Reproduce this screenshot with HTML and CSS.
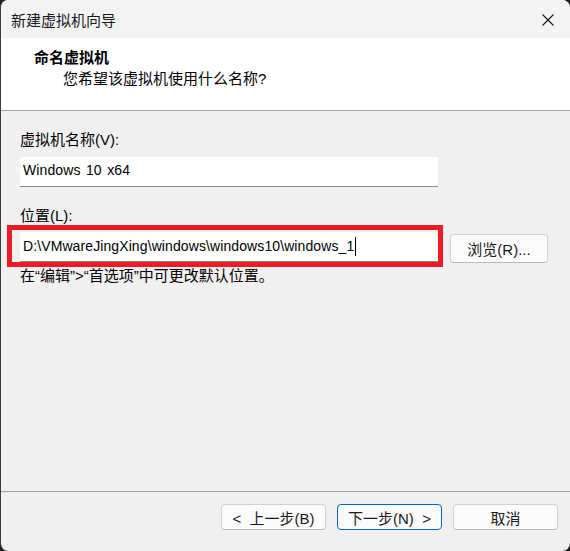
FILE: index.html
```html
<!DOCTYPE html>
<html lang="zh-CN">
<head>
<meta charset="utf-8">
<title>新建虚拟机向导</title>
<link rel="stylesheet" href="styles.css">
</head>
<body>
<div class="window">
  <div class="titlebar">
    <span class="title">新建虚拟机向导</span>
    <svg class="close" width="12" height="12" viewBox="0 0 12 12"><path d="M0.5 0.5 L11.5 11.5 M11.5 0.5 L0.5 11.5" stroke="#1a1a1a" stroke-width="1.1" fill="none"/></svg>
  </div>
  <div class="header">
    <div class="h-title">命名虚拟机</div>
    <div class="h-sub">您希望该虚拟机使用什么名称?</div>
  </div>
  <div class="content">
    <div class="label first">虚拟机名称(V):</div>
    <div class="input name">Windows 10 x64</div>
    <div class="label second">位置(L):</div>
    <div class="row">
      <div class="input">D:\VMwareJingXing\windows\windows10\windows_1<span class="caret"></span></div>
      <div class="btn browse">浏览(R)...</div>
      <div class="highlight"></div>
    </div>
    <div class="note">在“编辑”&gt;“首选项”中可更改默认位置。</div>
  </div>
  <div class="footer">
    <div class="btn">&lt;&nbsp; 上一步(B)</div>
    <div class="btn primary">下一步(N)&nbsp; &gt;</div>
    <div class="btn">取消</div>
  </div>
</div>
</body>
</html>
```
FILE: styles.css
```css
html, body {
  margin: 0;
  padding: 0;
  background: #202020;
}
body {
  width: 570px;
  height: 551px;
  overflow: hidden;
  font-family: "Liberation Sans", "Noto Sans CJK SC", sans-serif;
  font-size: 15px;
  color: #000;
}
.window {
  width: 569px;
  height: 551px;
  background: #f0f0f0;
  border-left: 1px solid #3c3c3c;
  border-radius: 8px;
  overflow: hidden;
  display: flex;
  flex-direction: column;
}
.titlebar {
  height: 38px;
  flex: none;
  background: #f3f3f3;
  display: flex;
  align-items: center;
  justify-content: space-between;
  padding: 0 16px 0 10px;
}
.title {
  line-height: 20px;
  color: #1a1a1a;
  margin-top: 3px;
}
.close {
  margin-top: 2px;
}
.header {
  height: 72px;
  flex: none;
  background: #fff;
  border-bottom: 1px solid #a0a0a0;
  padding: 0 0 0 33px;
  box-sizing: content-box;
}
.h-title {
  font-weight: bold;
  line-height: 20px;
  margin-top: 10px;
}
.h-sub {
  line-height: 20px;
  margin-top: 1px;
  margin-left: 29px;
}
.content {
  flex: 1;
  padding: 0 19px;
}
.label {
  line-height: 20px;
}
.label.first {
  margin-top: 19px;
  margin-bottom: 7px;
}
.label.second {
  margin-top: 19px;
  margin-bottom: 6px;
}
.input {
  width: 418px;
  height: 30px;
  box-sizing: border-box;
  background: #fff;
  border-bottom: 1px solid #8a8a8a;
  padding: 0 2px 3px 3px;
  font-size: 14px;
  letter-spacing: 0.1px;
  display: flex;
  align-items: center;
}
.input.name {
  word-spacing: 1.5px;
}
.row .input {
  padding-bottom: 1px;
}
.caret {
  display: inline-block;
  width: 1px;
  height: 19px;
  background: #000;
  margin-left: 1px;
}
.row {
  position: relative;
  display: flex;
  align-items: flex-start;
  gap: 12px;
}
.row .btn.browse {
  width: 98px;
  height: 29px;
  margin-top: 2px;
}
.highlight {
  position: absolute;
  left: -13px;
  top: -7px;
  width: 436px;
  height: 42px;
  box-sizing: border-box;
  border: 5px solid #ec1c24;
}
.note {
  line-height: 20px;
  margin-top: 3px;
}
.footer {
  height: 47px;
  flex: none;
  border-top: 1px solid #a0a0a0;
  display: flex;
  justify-content: flex-end;
  gap: 11px;
  padding: 12px 12px 0 0;
  box-sizing: content-box;
}
.btn {
  width: 105px;
  height: 26px;
  box-sizing: border-box;
  background: #fbfbfb;
  border: 1px solid #d0d0d0;
  border-bottom-color: #b8b8b8;
  border-radius: 4px;
  display: flex;
  align-items: center;
  justify-content: center;
  font-size: 15px;
  color: #1a1a1a;
}
.btn.primary {
  border: 1px solid #0067c0;
}
```
